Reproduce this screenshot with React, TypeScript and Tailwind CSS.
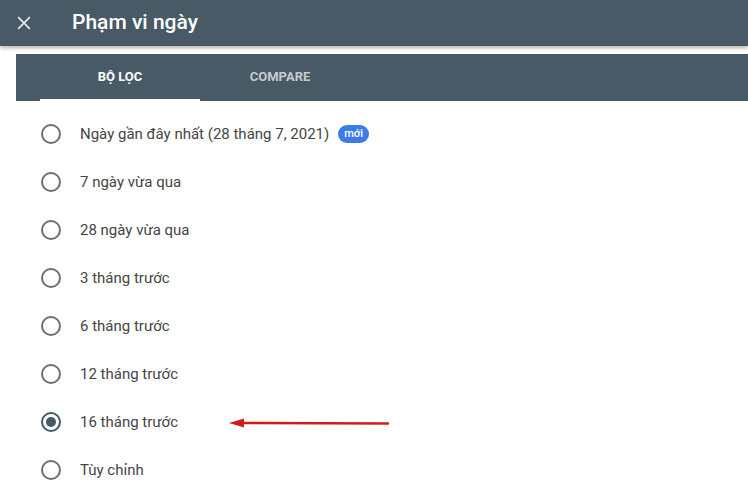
import React from "react";

const items = [
  "Ngày gần đây nhất (28 tháng 7, 2021)",
  "7 ngày vừa qua",
  "28 ngày vừa qua",
  "3 tháng trước",
  "6 tháng trước",
  "12 tháng trước",
  "16 tháng trước",
  "Tùy chỉnh",
];

export default function App() {
  return (
    <div
      className="w-[748px] h-[483px] bg-white overflow-hidden relative"
      style={{ fontFamily: "Roboto, 'Noto Sans', Arial, sans-serif" }}
    >
      <div className="h-[46px] bg-[#485a65] flex items-center shadow-[0_2px_4px_rgba(0,0,0,0.3)] relative z-10">
        <div className="w-[72px] flex items-center pl-[14px]">
          <svg width="20" height="20" viewBox="0 0 24 24" fill="none">
            <path d="M5 5L19 19M19 5L5 19" stroke="#e8ecee" strokeWidth="2" />
          </svg>
        </div>
        <div className="text-white text-[21px] font-medium leading-none pb-[2px]">Phạm vi ngày</div>
      </div>
      <div className="h-[8px]" />
      <div className="ml-[16px] h-[47px] bg-[#485a65] flex">
        <div className="w-[24px]" />
        <div className="w-[160px] flex flex-col">
          <div className="flex-1 flex items-center justify-center text-white text-[13px] font-bold">BỘ LỌC</div>
          <div className="h-[2px] bg-white" />
        </div>
        <div className="w-[160px] flex items-center justify-center text-[#c3cbd0] text-[13px] font-bold pb-[2px]">COMPARE</div>
      </div>
      <div className="flex flex-col pt-[9px]">
        {items.map((t, i) => (
          <div key={i} className="h-[48px] flex items-center pl-[41px]">
            {i === 6 ? (
              <div className="w-[20px] h-[20px] rounded-full border-2 border-[#455a64] flex items-center justify-center">
                <div className="w-[10px] h-[10px] rounded-full bg-[#455a64]" />
              </div>
            ) : (
              <div className="w-[20px] h-[20px] rounded-full border-2 border-[#6f6f6f]" />
            )}
            <div className="ml-[19px] text-[15px] text-[#454545]">{t}</div>
            {i === 0 && (
              <div className="ml-[9px] h-[18px] px-[6px] rounded-full bg-[#3b7ce8] text-white text-[11px] font-medium flex items-center">
                mới
              </div>
            )}
          </div>
        ))}
      </div>
      <svg className="absolute left-[229px] top-[417px]" width="162" height="12" viewBox="0 0 162 12">
        <path d="M12 6 L159 6.5" stroke="#d21c1c" strokeWidth="2.5" strokeLinecap="round" />
        <path d="M0 6 L15 1.5 L15 10.5 Z" fill="#d21c1c" />
      </svg>
    </div>
  );
}
